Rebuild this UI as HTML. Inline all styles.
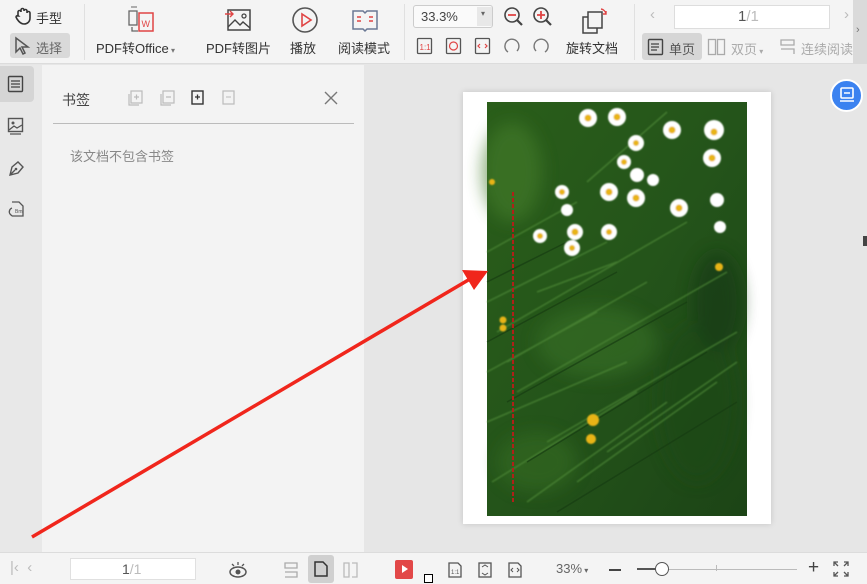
<!DOCTYPE html>
<html><head><meta charset="utf-8"><style>
*{margin:0;padding:0;box-sizing:border-box}
body{width:867px;height:584px;overflow:hidden;background:#e6e6e6;font-family:"Liberation Sans","Noto Sans CJK SC",sans-serif;position:relative;color:#333}
.a{position:absolute}
.t{font-size:13px;color:#333;white-space:nowrap}
svg{position:absolute;overflow:visible}
</style></head><body>
<!-- toolbar -->
<div class="a" style="left:0;top:0;width:867px;height:64px;background:#f4f4f4;border-bottom:1px solid #dcdcdc"></div>
<div class="a" style="left:84px;top:4px;width:1px;height:56px;background:#e0e0e0"></div>
<div class="a" style="left:404px;top:4px;width:1px;height:56px;background:#e0e0e0"></div>
<div class="a" style="left:634px;top:4px;width:1px;height:56px;background:#e0e0e0"></div>
<svg style="left:14px;top:7px" width="18" height="18"><path d="M4 9V5a1.5 1.5 0 013 0V3a1.5 1.5 0 013 0v1a1.5 1.5 0 013 0v2a1.5 1.5 0 013 0v5c0 4-3 6-6 6s-5-2-7-5l-1-2a1.5 1.5 0 012.5-1z" fill="none" stroke="#333" stroke-width="1.6"/></svg>
<div class="a t" style="left:36px;top:8px;font-size:13px">手型</div>
<div class="a" style="left:10px;top:33px;width:60px;height:25px;background:#d9d9d9;border-radius:3px"></div>
<svg style="left:14px;top:37px" width="16" height="18"><path d="M2 1v14l4-4 3 6 2-1-3-6h6z" fill="none" stroke="#555" stroke-width="1.5"/></svg>
<div class="a t" style="left:36px;top:38px;color:#666">选择</div>
<svg style="left:127px;top:5px" width="30" height="30"><rect x="2" y="6" width="8" height="14" fill="none" stroke="#666" stroke-width="1.3"/><path d="M4 2h6" stroke="#666"/><rect x="12" y="8" width="14" height="18" fill="none" stroke="#e04444" stroke-width="1.5"/><text x="14.5" y="22" font-size="9" fill="#e04444" font-family="Liberation Sans">W</text><path d="M5 22v4h6" fill="none" stroke="#666" stroke-width="1.3"/></svg>
<div class="a t" style="left:96px;top:38px">PDF转Office<span style="font-size:8px;color:#777"> ▾</span></div>
<svg style="left:225px;top:7px" width="28" height="26"><rect x="3" y="3" width="22" height="20" fill="none" stroke="#444" stroke-width="1.5"/><circle cx="19" cy="9" r="2" fill="none" stroke="#444" stroke-width="1.3"/><path d="M3 20l7-7 5 5 3-3 7 6" fill="none" stroke="#444" stroke-width="1.4"/><path d="M0 7h8m-3-3l3 3-3 3" fill="none" stroke="#e04444" stroke-width="1.4"/></svg>
<div class="a t" style="left:206px;top:38px">PDF转图片</div>
<svg style="left:290px;top:6px" width="30" height="30"><circle cx="15" cy="14" r="12" fill="none" stroke="#555" stroke-width="1.6"/><path d="M12 8v12l9-6z" fill="none" stroke="#e04444" stroke-width="1.6"/></svg>
<div class="a t" style="left:290px;top:38px">播放</div>
<svg style="left:351px;top:8px" width="28" height="24"><path d="M2 3h10l2 2 2-2h10v18H16l-2 2-2-2H2z" fill="none" stroke="#6a7894" stroke-width="1.5"/><path d="M6 9h4M6 13h4M18 9h4M18 13h4" stroke="#e04444" stroke-width="1.4"/></svg>
<div class="a t" style="left:338px;top:38px">阅读模式</div>
<div class="a" style="left:413px;top:5px;width:80px;height:23px;border:1px solid #ccc;background:#fafafa;border-radius:3px"></div>
<div class="a t" style="left:421px;top:9px;font-size:13px;color:#444">33.3%</div>
<div class="a" style="left:477px;top:7px;width:15px;height:19px;background:#e8e8e8"></div>
<div class="a t" style="left:481px;top:9px;font-size:8px;color:#666">▾</div>
<svg style="left:503px;top:6px" width="22" height="22"><circle cx="9" cy="9" r="7" fill="none" stroke="#444" stroke-width="1.6"/><path d="M5 9h8" stroke="#e04444" stroke-width="1.8"/><path d="M14 14l5 5" stroke="#444" stroke-width="2.2"/></svg>
<svg style="left:532px;top:6px" width="22" height="22"><circle cx="9" cy="9" r="7" fill="none" stroke="#444" stroke-width="1.6"/><path d="M5 9h8M9 5v8" stroke="#e04444" stroke-width="1.8"/><path d="M14 14l5 5" stroke="#444" stroke-width="2.2"/></svg>
<svg style="left:416px;top:37px" width="18" height="18"><rect x="1.5" y="1.5" width="14" height="15" rx="1" fill="none" stroke="#555" stroke-width="1.3"/><text x="3.5" y="13" font-size="8" fill="#e04444" font-family="Liberation Sans">1:1</text></svg>
<svg style="left:445px;top:37px" width="18" height="18"><rect x="1.5" y="1.5" width="14" height="15" rx="1" fill="none" stroke="#555" stroke-width="1.3"/><circle cx="8.5" cy="9" r="4" fill="none" stroke="#e04444" stroke-width="1.2"/></svg>
<svg style="left:474px;top:37px" width="18" height="18"><rect x="1.5" y="1.5" width="14" height="15" rx="1" fill="none" stroke="#555" stroke-width="1.3"/><path d="M6 7l-2 2 2 2M11 7l2 2-2 2" fill="none" stroke="#e04444" stroke-width="1.2"/></svg>
<svg style="left:503px;top:37px" width="18" height="18"><path d="M5 15A7 7 0 1114 14" fill="none" stroke="#777" stroke-width="1.4"/></svg>
<svg style="left:532px;top:37px" width="18" height="18"><path d="M13 15A7 7 0 104 14" fill="none" stroke="#777" stroke-width="1.4"/></svg>
<svg style="left:581px;top:5px" width="30" height="30"><rect x="2" y="12" width="14" height="16" fill="none" stroke="#444" stroke-width="1.5"/><rect x="7" y="7" width="14" height="16" fill="#f4f4f4" stroke="#444" stroke-width="1.5"/><path d="M20 4a6 6 0 015 5m0-3v3h-3" fill="none" stroke="#e04444" stroke-width="1.4"/></svg>
<div class="a t" style="left:566px;top:38px">旋转文档</div>
<div class="a t" style="left:650px;top:6px;color:#bbb;font-size:15px">‹</div>
<div class="a" style="left:674px;top:5px;width:156px;height:24px;background:#fff;border:1px solid #ddd"></div>
<div class="a t" style="left:738px;top:8px;font-size:15px;color:#555">1<span style="color:#bbb">/1</span></div>
<div class="a t" style="left:844px;top:6px;color:#bbb;font-size:15px">›</div>
<div class="a" style="left:642px;top:33px;width:60px;height:27px;background:#d6d6d6;border-radius:3px"></div>
<svg style="left:647px;top:38px" width="18" height="18"><rect x="1.5" y="1.5" width="14" height="15" rx="1" fill="none" stroke="#444" stroke-width="1.4"/><path d="M4 6h8M4 9h8M4 12h6" stroke="#444" stroke-width="1.2"/></svg>
<div class="a t" style="left:669px;top:39px;color:#555">单页</div>
<svg style="left:707px;top:38px" width="20" height="18"><rect x="1.5" y="1.5" width="7" height="15" fill="none" stroke="#aaa" stroke-width="1.3"/><rect x="10.5" y="1.5" width="7" height="15" fill="none" stroke="#aaa" stroke-width="1.3"/></svg>
<div class="a t" style="left:731px;top:39px;color:#aaa">双页<span style="font-size:8px"> ▾</span></div>
<svg style="left:779px;top:38px" width="18" height="18"><path d="M2 2h13v5H2zM2 11h13v5" fill="none" stroke="#aaa" stroke-width="1.3"/></svg>
<div class="a t" style="left:801px;top:39px;color:#aaa;width:52px;overflow:hidden">连续阅读</div>
<div class="a" style="left:853px;top:0;width:14px;height:64px;background:#dadada"></div>
<div class="a t" style="left:856px;top:24px;color:#777;font-size:11px">›</div>
<!-- left strip -->
<div class="a" style="left:0;top:65px;width:42px;height:487px;background:#e8e8e8"></div>
<div class="a" style="left:0;top:66px;width:34px;height:36px;background:#d5d5d5;border-radius:0 4px 4px 0"></div>
<svg style="left:7px;top:75px" width="18" height="18"><rect x="1.5" y="1.5" width="14" height="15" rx="1" fill="none" stroke="#444" stroke-width="1.4"/><path d="M4 6h9M4 9h9M4 12h9" stroke="#444" stroke-width="1.2"/></svg>
<svg style="left:7px;top:117px" width="18" height="18"><rect x="1.5" y="1.5" width="14" height="13" fill="none" stroke="#555" stroke-width="1.4"/><circle cx="6" cy="6" r="1.5" fill="#555"/><path d="M2 13l5-4 3 2 5-3M3 17h11" fill="none" stroke="#555" stroke-width="1.3"/></svg>
<svg style="left:7px;top:159px" width="18" height="18"><path d="M3 16l2-8 6-5 5 5-5 6z M3 16l5-5" fill="none" stroke="#555" stroke-width="1.4"/><circle cx="9" cy="10" r="1.3" fill="#555"/></svg>
<svg style="left:7px;top:200px" width="18" height="18"><path d="M5 2h7l4 4v10H5" fill="none" stroke="#555" stroke-width="1.3"/><path d="M5 8a4 4 0 00-2 6l2 2" fill="none" stroke="#555" stroke-width="1.3"/><text x="8" y="13" font-size="5" fill="#555">Bm</text></svg>
<!-- panel -->
<div class="a" style="left:42px;top:65px;width:322px;height:487px;background:#f3f3f3"></div>
<div class="a t" style="left:62px;top:90px;font-size:14px;color:#444">书签</div>
<svg style="left:128px;top:90px" width="110" height="16"><g fill="none" stroke="#bbb" stroke-width="1.2"><rect x="3" y="1" width="11" height="12"/><path d="M6 7h5M8.5 4.5v5M1 4v11h10"/><rect x="35" y="1" width="11" height="12"/><path d="M38 7h5M33 4v11h10"/></g><rect x="64" y="1" width="11" height="13" fill="none" stroke="#333" stroke-width="1.4"/><path d="M67 7h5M69.5 4.5v5" stroke="#333" stroke-width="1.3"/><rect x="95" y="1" width="11" height="13" fill="none" stroke="#bbb" stroke-width="1.2"/><path d="M98 7h5" stroke="#bbb"/></svg>
<svg style="left:324px;top:91px" width="14" height="14"><path d="M1 1l12 12M13 1L1 13" stroke="#777" stroke-width="1.4"/></svg>
<div class="a" style="left:53px;top:123px;width:301px;height:1px;background:#bbb"></div>
<div class="a t" style="left:70px;top:146px;color:#888;font-size:13px">该文档不包含书签</div>
<!-- page -->
<div class="a" style="left:463px;top:92px;width:308px;height:432px;background:#fff;box-shadow:0 0 6px rgba(0,0,0,.15)"></div>
<svg style="left:487px;top:102px" width="260" height="414">
<defs>
<linearGradient id="g" x1="0" y1="0" x2="1" y2="1"><stop offset="0" stop-color="#2a5e1a"/><stop offset=".5" stop-color="#24541a"/><stop offset="1" stop-color="#1c4416"/></linearGradient>
<filter id="b"><feGaussianBlur stdDeviation="8"/></filter>
<filter id="b2"><feGaussianBlur stdDeviation="0.8"/></filter>
</defs>
<rect width="260" height="414" fill="url(#g)"/>
<g filter="url(#b)" opacity=".6">
<ellipse cx="25" cy="70" rx="30" ry="50" fill="#447d2c"/>
<ellipse cx="210" cy="300" rx="40" ry="80" fill="#1f4a17"/>
<ellipse cx="110" cy="240" rx="60" ry="35" fill="#376f25"/>
<ellipse cx="50" cy="360" rx="40" ry="30" fill="#356b24"/>
<ellipse cx="230" cy="200" rx="25" ry="50" fill="#163812"/>
</g>
<g stroke="#4f8a38" stroke-width="1.5" opacity=".7" filter="url(#b2)">
<path d="M0 200L120 140M20 260L160 180M0 320L140 260M40 400L180 300M100 80L180 10M60 340L250 230M0 150L90 100M10 230L200 120M30 290L240 170M5 380L150 290M90 380L230 280M0 270L110 210M120 350L250 260M50 190L130 160"/>
</g>
<g stroke="#173d12" stroke-width="1.5" opacity=".7">
<path d="M0 240L130 170M20 300L200 200M40 360L220 250M70 410L250 300M0 180L80 140"/>
</g>
<g filter="url(#b2)">
<g fill="#fff">
<circle cx="101" cy="16" r="9"/><circle cx="130" cy="15" r="9"/><circle cx="185" cy="28" r="9"/><circle cx="227" cy="28" r="10"/><circle cx="149" cy="41" r="8"/><circle cx="225" cy="56" r="9"/><circle cx="137" cy="60" r="7"/><circle cx="150" cy="73" r="7"/><circle cx="75" cy="90" r="7"/><circle cx="122" cy="90" r="9"/><circle cx="166" cy="78" r="6"/><circle cx="149" cy="96" r="9"/><circle cx="192" cy="106" r="9"/><circle cx="230" cy="98" r="7"/><circle cx="53" cy="134" r="7"/><circle cx="88" cy="130" r="8"/><circle cx="122" cy="130" r="8"/><circle cx="85" cy="146" r="8"/><circle cx="233" cy="125" r="6"/><circle cx="80" cy="108" r="6"/>
</g>
<g fill="#e8b412">
<circle cx="101" cy="16" r="3.5"/><circle cx="130" cy="15" r="3.5"/><circle cx="185" cy="28" r="3.5"/><circle cx="227" cy="30" r="3.5"/><circle cx="149" cy="41" r="3"/><circle cx="225" cy="56" r="3.5"/><circle cx="137" cy="60" r="3"/><circle cx="75" cy="90" r="3"/><circle cx="122" cy="90" r="3.5"/><circle cx="149" cy="96" r="3.5"/><circle cx="192" cy="106" r="3.5"/><circle cx="53" cy="134" r="3"/><circle cx="88" cy="130" r="3.5"/><circle cx="122" cy="130" r="3"/><circle cx="85" cy="146" r="3"/>
<circle cx="232" cy="165" r="4"/><circle cx="106" cy="318" r="6"/><circle cx="104" cy="337" r="5"/><circle cx="16" cy="218" r="3.5"/><circle cx="16" cy="226" r="3.5"/><circle cx="5" cy="80" r="3"/>
</g>
</g>
<path d="M26 90V400" stroke="#b02018" stroke-width="2" stroke-dasharray="4 2"/>
</svg>
<svg style="left:0;top:0" width="867" height="584"><path d="M32 537L470 279" stroke="#f0261c" stroke-width="3.5"/><path d="M488 271L462 270L474 290z" fill="#f0261c"/></svg>
<div class="a" style="left:830px;top:79px;width:33px;height:33px;border-radius:50%;background:#3b82f0;border:2px solid #fff"></div>
<svg style="left:838px;top:86px" width="18" height="18"><rect x="3" y="2" width="12" height="10" rx="1" fill="none" stroke="#fff" stroke-width="1.6"/><path d="M2 15h14M6 7h6" stroke="#fff" stroke-width="1.5"/></svg>
<div class="a" style="left:863px;top:236px;width:4px;height:10px;background:#444"></div>
<!-- bottom bar -->
<div class="a" style="left:0;top:552px;width:867px;height:32px;background:#f4f4f4;border-top:1px solid #dcdcdc"></div>
<div class="a t" style="left:10px;top:559px;color:#bbb;font-size:15px">|‹ &nbsp;‹</div>
<div class="a" style="left:70px;top:558px;width:126px;height:22px;background:#fff;border:1px solid #e0e0e0"></div>
<div class="a t" style="left:122px;top:561px;font-size:14px;color:#555">1<span style="color:#bbb">/1</span></div>
<svg style="left:228px;top:560px" width="20" height="20"><ellipse cx="10" cy="12" rx="8" ry="5" fill="none" stroke="#555" stroke-width="1.5"/><circle cx="10" cy="12" r="2.5" fill="#555"/><path d="M10 2v3M4 4l2 2M16 4l-2 2" stroke="#555" stroke-width="1.3"/></svg>
<svg style="left:283px;top:561px" width="16" height="18"><path d="M2 2h12v5H2zM2 11h12v5H2" fill="none" stroke="#aaa" stroke-width="1.3"/></svg>
<div class="a" style="left:308px;top:555px;width:26px;height:28px;background:#d0d0d0;border-radius:3px"></div>
<svg style="left:313px;top:560px" width="16" height="18"><path d="M2 2h8l4 4v10H2z" fill="none" stroke="#333" stroke-width="1.5"/></svg>
<svg style="left:342px;top:561px" width="18" height="18"><path d="M2 2h5v14H2zM10 2h5v14h-5" fill="none" stroke="#bbb" stroke-width="1.3"/></svg>
<div class="a" style="left:395px;top:560px;width:18px;height:19px;background:#e24848;border-radius:2px"></div>
<div class="a" style="left:402px;top:565px;width:0;height:0;border-left:6px solid #fff;border-top:4.5px solid transparent;border-bottom:4.5px solid transparent"></div>
<div class="a" style="left:424px;top:574px;width:9px;height:9px;border:1.3px solid #000;background:#fff"></div>
<svg style="left:447px;top:561px" width="16" height="18"><path d="M2 2h9l3 3v11H2z" fill="none" stroke="#555" stroke-width="1.3"/><text x="4" y="13" font-size="6" fill="#555">1:1</text></svg>
<svg style="left:477px;top:561px" width="16" height="18"><rect x="2" y="2" width="12" height="14" fill="none" stroke="#555" stroke-width="1.3"/><path d="M5 6l3-2 3 2M5 12l3 2 3-2" fill="none" stroke="#555"/></svg>
<svg style="left:507px;top:561px" width="16" height="18"><path d="M2 2h9l3 3v11H2z" fill="none" stroke="#555" stroke-width="1.3"/><path d="M6 7l-2 2 2 2M10 7l2 2-2 2" fill="none" stroke="#555"/></svg>
<div class="a t" style="left:556px;top:561px;font-size:13px;color:#666">33%<span style="font-size:8px"> ▾</span></div>
<div class="a" style="left:609px;top:569px;width:12px;height:2px;background:#444"></div>
<div class="a" style="left:637px;top:569px;width:160px;height:1px;background:#bbb"></div>
<div class="a" style="left:637px;top:568px;width:20px;height:2px;background:#555"></div>
<div class="a" style="left:716px;top:565px;width:1px;height:6px;background:#bbb"></div>
<div class="a" style="left:655px;top:562px;width:14px;height:14px;border-radius:50%;border:1.5px solid #555;background:#fff"></div>
<div class="a t" style="left:808px;top:557px;font-size:19px;color:#444">+</div>
<svg style="left:833px;top:561px" width="16" height="16"><path d="M1 5V1h4M11 1h4v4M15 11v4h-4M5 15H1v-4M1 1l4 4M15 1l-4 4M15 15l-4-4M1 15l4-4" fill="none" stroke="#555" stroke-width="1.3"/></svg>
</body></html>
